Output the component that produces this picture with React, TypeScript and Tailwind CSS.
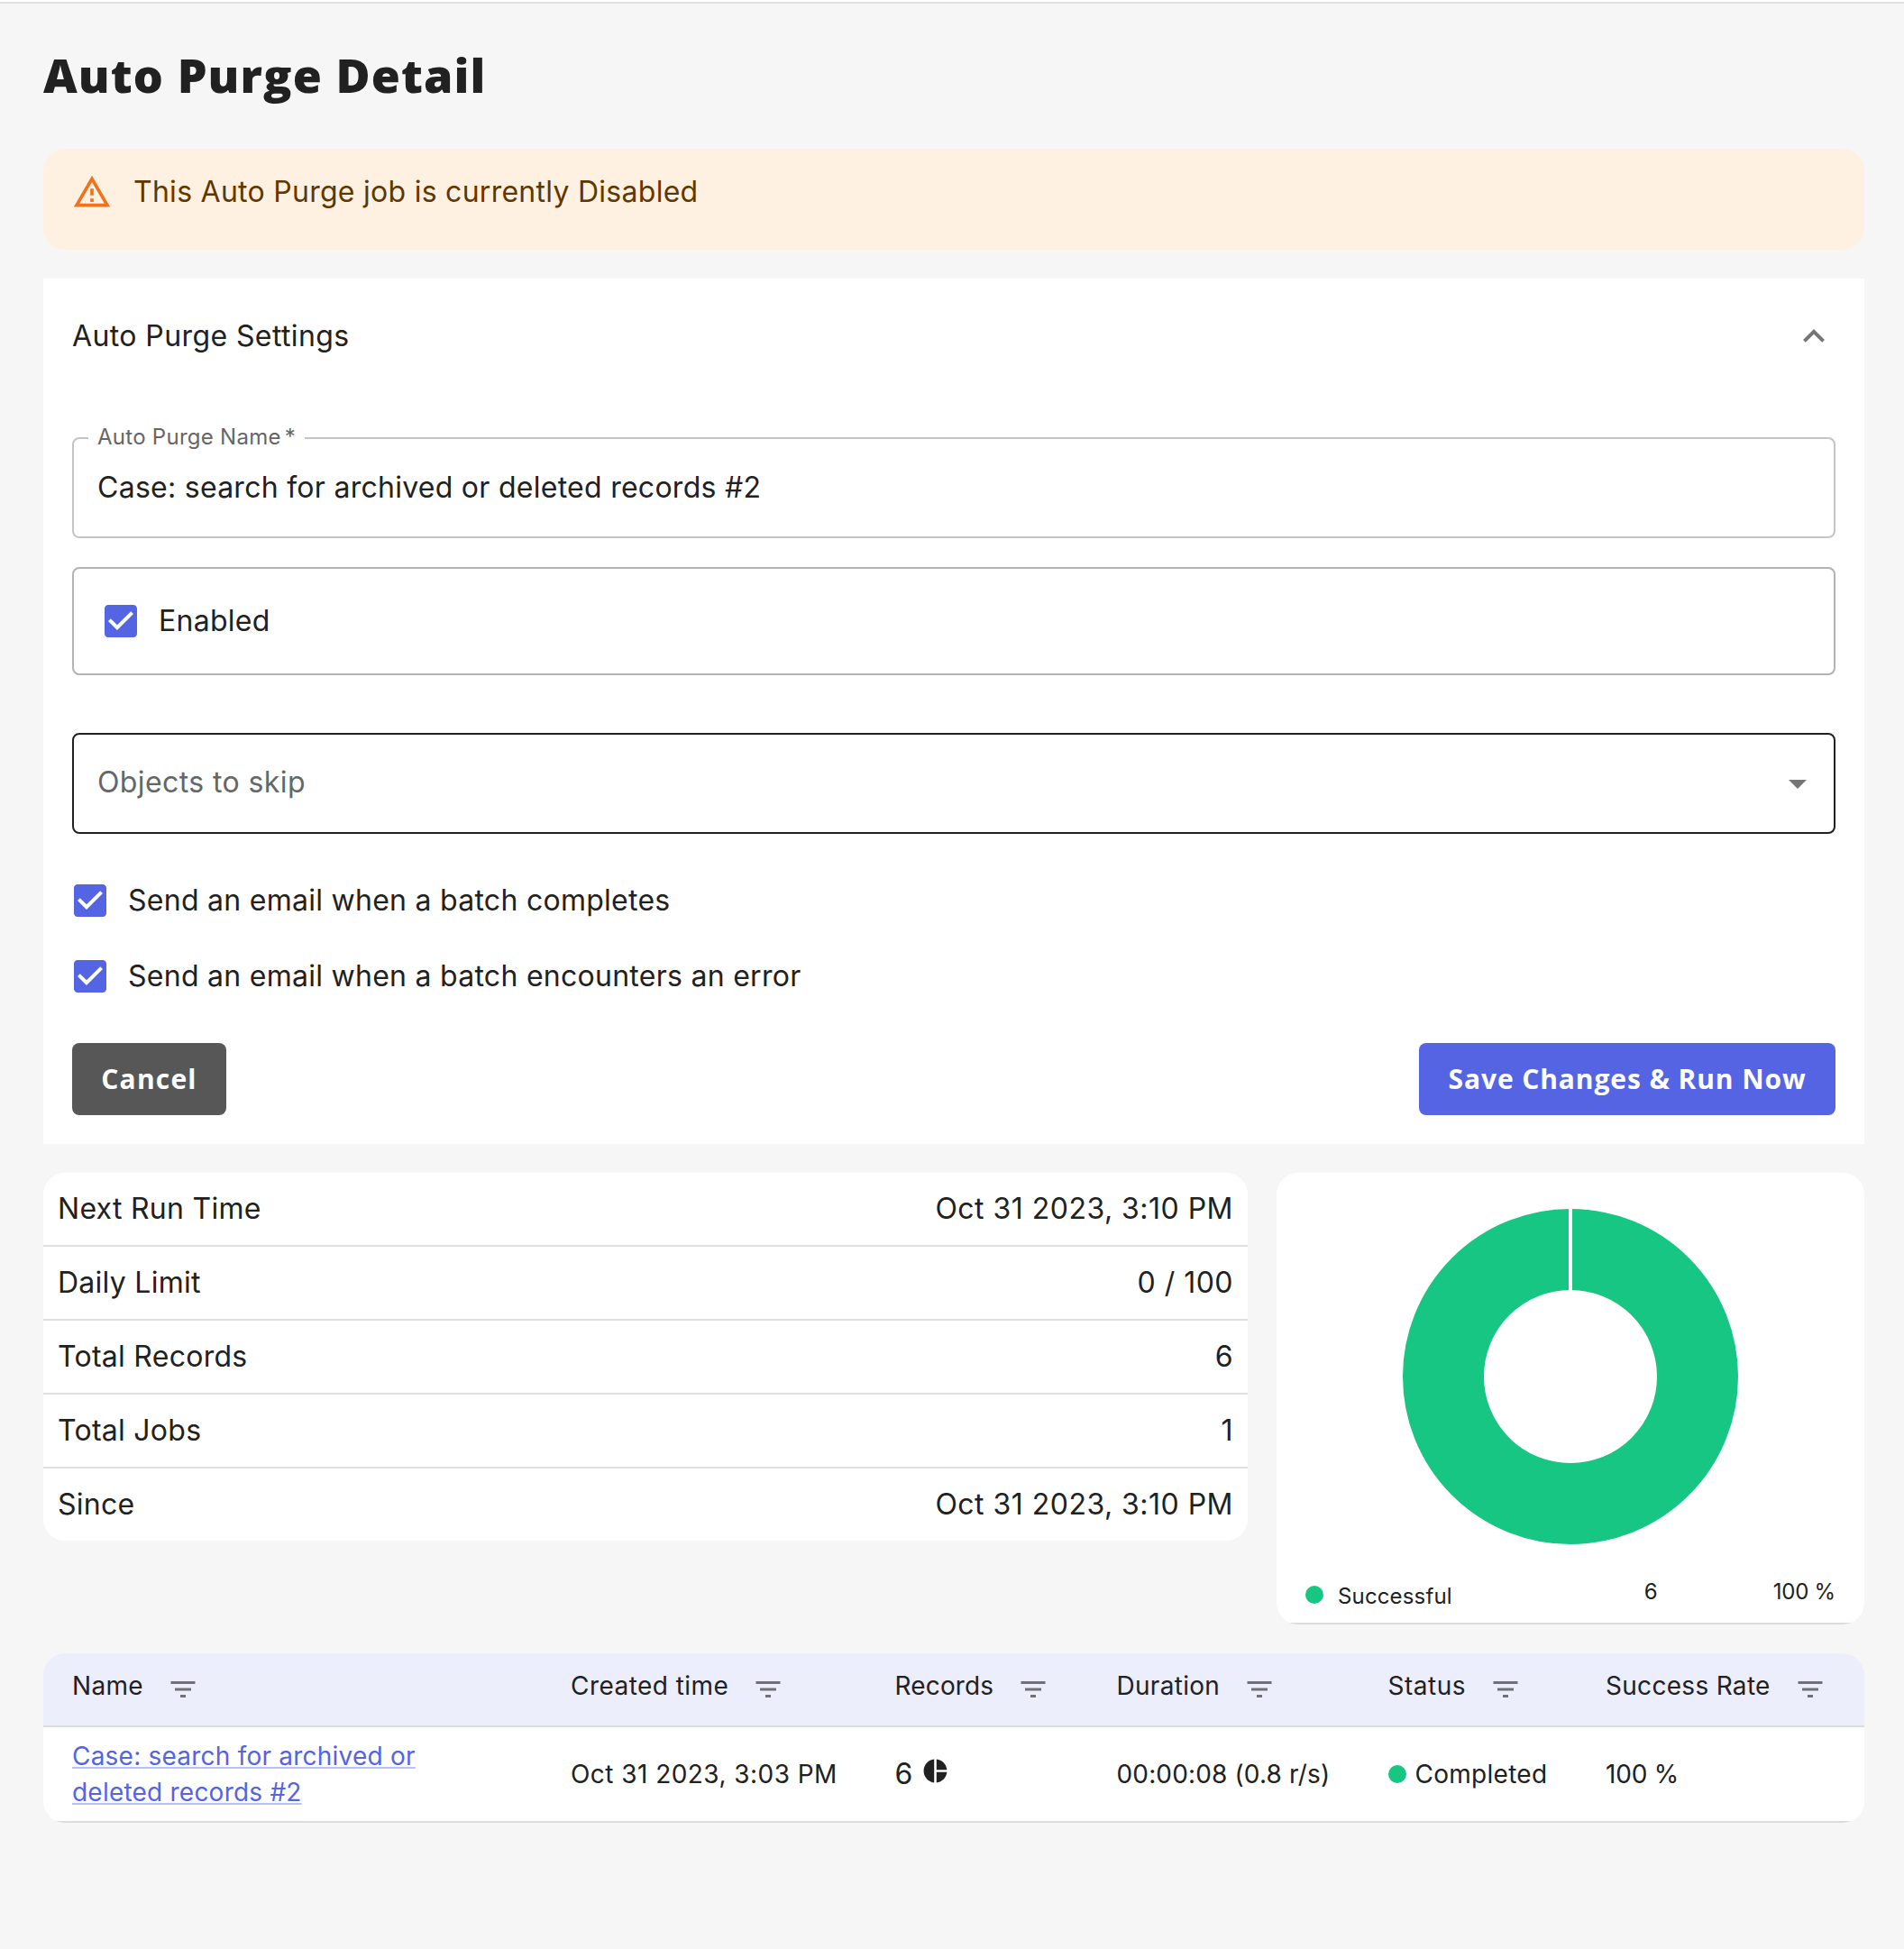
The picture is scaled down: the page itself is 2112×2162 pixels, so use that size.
const INTER = "font-['Inter',sans-serif]";

function Checkbox() {
  return (
    <svg viewBox="0 0 24 24" className="size-12 shrink-0 fill-[#5464e3]">
      <path d="M19 3H5c-1.11 0-2 .9-2 2v14c0 1.1.89 2 2 2h14c1.11 0 2-.9 2-2V5c0-1.1-.89-2-2-2zm-9 14l-5-5 1.41-1.41L10 14.17l7.59-7.59L19 8l-9 9z" />
    </svg>
  );
}

function FilterIcon() {
  return (
    <svg viewBox="0 0 24 24" className="size-9 shrink-0 fill-[#717175]">
      <path d="M10 18h4v-2h-4v2zM3 6v2h18V6H3zm3 7h12v-2H6v2z" />
    </svg>
  );
}

const stats = [
  ["Next Run Time", "Oct 31 2023, 3:10 PM"],
  ["Daily Limit", "0 / 100"],
  ["Total Records", "6"],
  ["Total Jobs", "1"],
  ["Since", "Oct 31 2023, 3:10 PM"],
];

const columns = [
  { title: "Name", tracking: "tracking-[0.3px]" },
  { title: "Created time", tracking: "tracking-[0.45px]" },
  { title: "Records", tracking: "tracking-[0.15px]" },
  { title: "Duration", tracking: "tracking-[0.3px]" },
  { title: "Status", tracking: "tracking-[0.5px]" },
  { title: "Success Rate", tracking: "tracking-[0.3px]" },
];

const GRID = "grid grid-cols-[553px_359.5px_246px_301px_241.5px_1fr] pl-8";

export default function App() {
  return (
    <div className={`${INTER} min-h-[2162px] w-[2112px] bg-[#f6f6f6] text-[32px] leading-[48px] tracking-[0.27px] text-[#212121]`}>
      <div className="h-1 border-b-2 border-[#e0e0e0] bg-white" />
      <main className="flex flex-col gap-8 pr-11 pl-12">
        <h1 className="mt-11 mb-[15px] h-[70px] font-['Open_Sans',sans-serif] text-[52px] leading-[70px] font-extrabold tracking-[1.1px] whitespace-nowrap">
          Auto Purge Detail
        </h1>

        <div className="flex h-28 gap-6 rounded-3xl bg-[#fff1e1] pt-6 pl-8 text-[#5f3700]">
          <svg viewBox="0 0 24 24" className="mt-0.5 size-11 fill-[#f2711c]">
            <path d="M12 5.99L19.53 19H4.47L12 5.99M12 2L1 21h22L12 2zm1 14h-2v2h2v-2zm0-6h-2v4h2v-4z" />
          </svg>
          <p>This Auto Purge job is currently Disabled</p>
        </div>

        <section className="flex h-[960px] flex-col bg-white px-8">
          <div className="flex h-32 items-center justify-between">
            <h2 className="tracking-[0.4px]">Auto Purge Settings</h2>
            <svg viewBox="0 0 24 24" className="size-12 fill-[#757575]">
              <path d="M12 8l-6 6 1.41 1.41L12 10.83l4.59 4.58L18 14z" />
            </svg>
          </div>

          <div className="relative mt-12 flex h-28 items-center rounded-lg border-2 border-[#c4c4c4] px-[26px]">
            <label className="absolute -top-[26px] left-4 bg-white px-2.5 text-[24px] text-[#666666]">
              Auto Purge Name<span className="ml-1">*</span>
            </label>
            Case: search for archived or deleted records #2
          </div>

          <div className="mt-8 flex h-[120px] items-center gap-[18px] rounded-lg border-2 border-[#b3b3b3] pl-7">
            <Checkbox />
            Enabled
          </div>

          <div className="mt-16 flex h-28 items-center justify-between rounded-lg border-2 border-[#212121] pr-4 pl-[26px] text-[#666666]">
            <span className="pb-0.5 tracking-[0.4px]">Objects to skip</span>
            <svg viewBox="0 0 24 24" className="size-12 fill-[#757575]">
              <path d="M7 10l5 5 5-5z" />
            </svg>
          </div>

          <div className="-ml-1 mt-[50px] flex items-center gap-[18px]">
            <Checkbox />
            Send an email when a batch completes
          </div>
          <div className="-ml-1 mt-9 flex items-center gap-[18px]">
            <Checkbox />
            Send an email when a batch encounters an error
          </div>

          <div className="mt-[50px] flex justify-between font-['Open_Sans',sans-serif] text-[30px] font-bold text-white">
            <button className="h-20 w-[171px] rounded-lg bg-[#575757] tracking-[1.2px]">Cancel</button>
            <button className="h-20 w-[462px] rounded-lg bg-[#5464e3] tracking-[0.9px]">Save Changes &amp; Run Now</button>
          </div>
        </section>

        <div className="grid grid-cols-[1336px_652px] items-start gap-8">
          <dl className="divide-y-2 divide-[#e0e0e0] overflow-hidden rounded-3xl bg-white">
            {stats.map(([label, value]) => (
              <div key={label} className="box-content flex h-20 items-center justify-between px-4">
                <dt>{label}</dt>
                <dd className="tracking-[0.48px]">{value}</dd>
              </div>
            ))}
          </dl>

          <div className="overflow-hidden rounded-3xl">
            <div className="flex h-[501px] flex-col items-center border-b-2 border-[#dcdcdc] bg-white pt-10">
              <svg viewBox="0 0 372 372" className="size-[372px] shrink-0">
                <circle cx="186" cy="186" r="141" fill="none" stroke="#17c683" strokeWidth="90" />
                <path d="M186 0v92" stroke="#fff" strokeWidth="4" />
              </svg>
              <div className="mt-[34px] flex w-full items-start px-8 text-[24px] leading-[36px]">
                <span className="mt-3 size-5 rounded-full bg-[#17c683]" />
                <span className="mt-1.5 ml-4 w-[264px] tracking-[0.15px]">Successful</span>
                <span className="mt-px w-[91px] text-right">6</span>
                <span className="mt-px grow text-right tracking-[-0.2px]">100 %</span>
              </div>
            </div>
          </div>
        </div>

        <div className="overflow-hidden rounded-3xl">
          <div className="h-[188px] border-b-2 border-[#dcdcdc] bg-white text-[28px] leading-[40px]">
            <div className={`${GRID} h-[82px] border-b-2 border-[#dcdcdc] bg-[#edeefc]`}>
              {columns.map((c) => (
                <div key={c.title} className="flex gap-[26px] pt-4 whitespace-nowrap">
                  <span className={c.tracking}>{c.title}</span>
                  <span className="pt-1.5"><FilterIcon /></span>
                </div>
              ))}
            </div>
            <div className={`${GRID} h-[104px] items-center whitespace-nowrap`}>
              <a className="w-[400px] tracking-[0.22px] whitespace-normal text-[#5464e3] underline decoration-[#b9c0f5] decoration-2 underline-offset-2 [text-decoration-skip-ink:none]">
                Case: search for archived or deleted records #2
              </a>
              <span className="tracking-[0.45px]">Oct 31 2023, 3:03 PM</span>
              <span className="flex items-center gap-[9px] text-[32px]">
                6
                <svg viewBox="0 0 24 24" className="-mt-2 size-[31px] fill-[#212121]">
                  <path d="M11 2v20c-5.07-.5-9-4.79-9-10s3.93-9.5 9-10zm2.03 0v8.99H22c-.47-4.74-4.24-8.52-8.97-8.99zm0 11.01V22c4.74-.47 8.5-4.25 8.97-8.99h-8.97z" />
                </svg>
              </span>
              <span className="tracking-[0.15px]">00:00:08 (0.8 r/s)</span>
              <span className="flex items-center gap-2.5">
                <span className="size-5 rounded-full bg-[#17c683]" />
                Completed
              </span>
              <span className="tracking-[-0.2px]">100 %</span>
            </div>
          </div>
        </div>
      </main>
    </div>
  );
}
